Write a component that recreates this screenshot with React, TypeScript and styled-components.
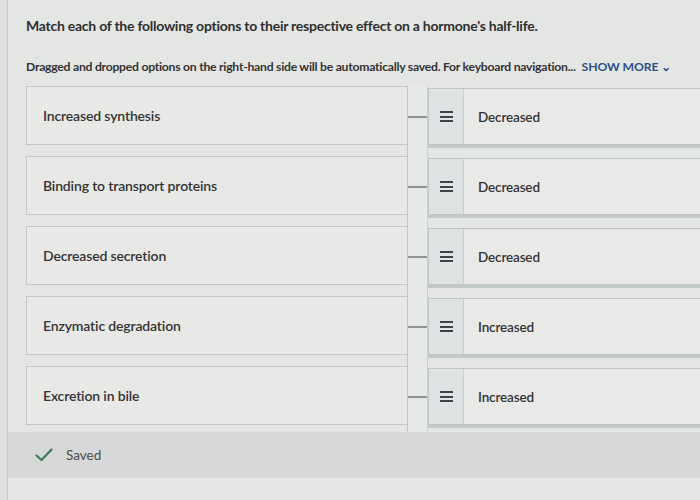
import React from "react";
import styled, { createGlobalStyle } from "styled-components";

const Global = createGlobalStyle`
  html, body { margin: 0; padding: 0; background: #dfe1de; }
  body { font-family: "Lato", "Open Sans", sans-serif; color: #333; overflow: hidden; }
`;

const Page = styled.div`
  width: 700px;
  height: 500px;
  padding-left: 7px;
  box-sizing: border-box;
  background: #dcdfdc;
  overflow: hidden;
`;

const Panel = styled.div`
  height: 100%;
  border-left: 1px solid #c4c7c5;
  background: #e4e6e3;
  display: flex;
  flex-direction: column;
  overflow: hidden;
`;

const Content = styled.div`
  padding: 16px 0 0 18px;
`;

const Title = styled.div`
  font-size: 14px;
  line-height: 20px;
  font-weight: 700;
  color: #2e2f30;
  letter-spacing: -0.25px;
  white-space: nowrap;
`;

const Sub = styled.div`
  margin-top: 23px;
  font-size: 12.2px;
  line-height: 16px;
  font-weight: 700;
  color: #333;
  letter-spacing: -0.25px;
  white-space: nowrap;
`;

const ShowMore = styled.span`
  color: #2c4f8e;
  margin-left: 6px;
  font-weight: 700;
  letter-spacing: -0.1px;
`;

const Rows = styled.div`
  margin-top: 11px;
  display: flex;
  flex-direction: column;
`;

const Row = styled.div`
  display: flex;
  height: 70px;
  &:last-child { height: 66px; }
`;

const LeftBox = styled.div`
  flex: 0 0 381px;
  height: 59px;
  box-sizing: border-box;
  border: 1px solid #c6c9c7;
  border-right: none;
  background: #e8e9e7;
  display: flex;
  align-items: center;
  padding-left: 16px;
  font-size: 14px;
  font-weight: 600;
  color: #333;
  letter-spacing: -0.15px;
`;

const Track = styled.div`
  flex: 0 0 21px;
  box-sizing: border-box;
  align-self: stretch;
  border-left: 1px solid #c2c6c4;
  border-right: 1px solid #ccd0cf;
  background: #e7e9e7;
`;

const Link = styled.div`
  height: 2px;
  margin-top: 30px;
  background: #8e9593;
`;

const RightBox = styled.div`
  flex: 0 0 300px;
  margin-top: 2px;
  height: 57px;
  box-sizing: border-box;
  border: 1px solid #bfc4c4;
  box-shadow: 0 3px 0 #c3c8c8;
  background: #e9eae7;
  display: flex;
  align-items: stretch;
`;

const Handle = styled.div`
  width: 34px;
  background: #dde2e3;
  border-right: 1px solid #c9cecf;
  display: flex;
  align-items: center;
  justify-content: center;
`;

const Grip = styled.div`
  width: 13px;
  display: flex;
  flex-direction: column;
  gap: 2.5px;
  & > span { display: block; height: 2px; background: #3e4244; }
`;

const RightLabel = styled.div`
  display: flex;
  align-items: center;
  padding-left: 14px;
  font-size: 13.5px;
  font-weight: 600;
  color: #333;
  letter-spacing: -0.15px;
`;

const SavedBar = styled.div`
  height: 46px;
  background: #d6d9d7;
  display: flex;
  align-items: center;
  padding-left: 27px;
  gap: 13px;
  font-size: 13.5px;
  color: #4a4d4e;
`;

const data: [string, string][] = [
  ["Increased synthesis", "Decreased"],
  ["Binding to transport proteins", "Decreased"],
  ["Decreased secretion", "Decreased"],
  ["Enzymatic degradation", "Increased"],
  ["Excretion in bile", "Increased"],
];

export default function App() {
  return (
    <Page>
      <Global />
      <Panel>
        <Content>
          <Title>Match each of the following options to their respective effect on a hormone's half-life.</Title>
          <Sub>
            Dragged and dropped options on the right-hand side will be automatically saved. For keyboard navigation...
            <ShowMore>SHOW MORE ⌄</ShowMore>
          </Sub>
          <Rows>
            {data.map(([l, r], i) => (
              <Row key={i}>
                <LeftBox>{l}</LeftBox>
                <Track>
                  <Link />
                </Track>
                <RightBox>
                  <Handle>
                    <Grip>
                      <span />
                      <span />
                      <span />
                    </Grip>
                  </Handle>
                  <RightLabel>{r}</RightLabel>
                </RightBox>
              </Row>
            ))}
          </Rows>
        </Content>
        <SavedBar>
          <svg width="18" height="14" viewBox="0 0 18 14">
            <path d="M1.5 7.5 L6.5 12 L16.5 1.5" fill="none" stroke="#3d7a5a" strokeWidth="2.2" strokeLinecap="round" strokeLinejoin="round" />
          </svg>
          <span>Saved</span>
        </SavedBar>
      </Panel>
    </Page>
  );
}
